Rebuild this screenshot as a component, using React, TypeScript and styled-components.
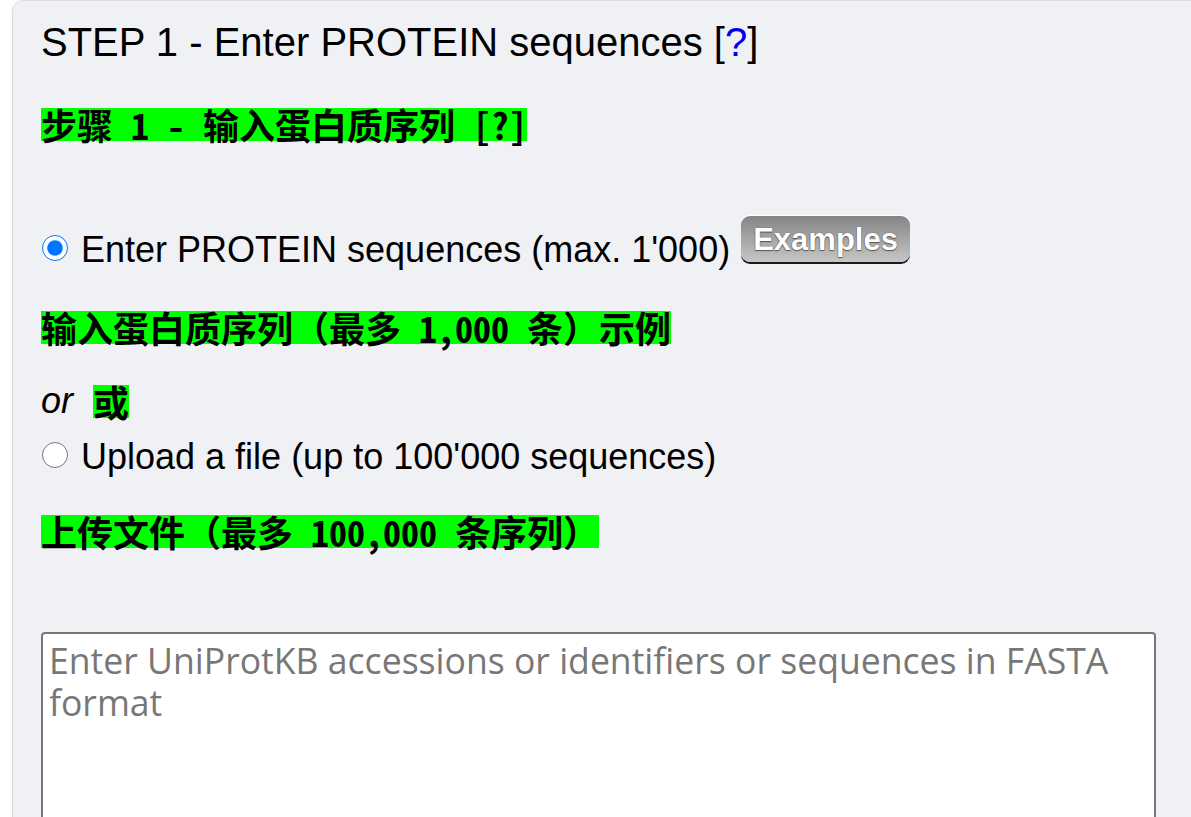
import React from 'react';
import styled, { createGlobalStyle } from 'styled-components';

const GlobalStyle = createGlobalStyle`
  body {
    margin: 0;
    background: #ffffff;
    font-family: "Liberation Sans", Arial, sans-serif;
    overflow: hidden;
  }
`;

const Panel = styled.div`
  margin: 0 -40px 0 12px;
  padding: 16px 74px 0 28px;
  background: #f0f1f5;
  border: 1px solid #dcdde2;
  border-radius: 12px;
  box-shadow: 0 0 3px rgba(0, 0, 0, 0.08);
  min-height: 900px;
`;

const Title = styled.h3`
  margin: 0;
  font-size: 40px;
  font-weight: normal;
  color: #000;
  line-height: 50px;
`;

const HelpLink = styled.a`
  color: #0000ee;
  text-decoration: none;
`;

const ZhLine = styled.div<{ $top: number }>`
  display: flex;
  margin-top: ${(p) => p.$top}px;
`;

const Zh = styled.span`
  display: inline-block;
  height: 33px;
  line-height: 33px;
  background: #00ff00;
  color: #000;
  font-family: "Noto Sans Mono CJK SC", "Liberation Mono", "Noto Sans CJK SC", monospace;
  font-size: 36px;
  font-style: normal;
  font-weight: bold;
  white-space: pre;
`;

const OptionRow = styled.label<{ $top: number }>`
  display: flex;
  align-items: center;
  margin-top: ${(p) => p.$top}px;
  font-size: 36px;
  color: #000;
  height: 48px;
`;

const Radio = styled.input`
  width: 26px;
  height: 26px;
  margin: -4px 13px 0 1px;
  accent-color: #0075ff;
`;

const ExamplesButton = styled.button`
  align-self: flex-start;
  margin: -10px 0 0 11px;
  height: 46px;
  padding: 2px 12px 0;
  border: none;
  border-radius: 9px;
  background: linear-gradient(#858585, #c6c6c6);
  box-shadow: 0 -1px 0 #ffffff, 0 2px 0 #1a1a1a;
  color: #ffffff;
  font-family: "Liberation Sans", Arial, sans-serif;
  font-size: 31px;
  font-weight: bold;
  text-shadow: 0 1px 1px #555, 0 0 1px #333;
`;

const OrRow = styled.div`
  display: flex;
  align-items: center;
  gap: 20px;
  margin-top: 39px;
  height: 36px;
  font-size: 36px;
  font-style: italic;
`;

const Sequences = styled.textarea`
  display: block;
  box-sizing: border-box;
  width: 100%;
  height: 260px;
  margin-top: 84px;
  padding: 5px 6px;
  border: 2px solid #767676;
  border-radius: 4px;
  background: #fff;
  font-family: "Open Sans", "Noto Sans", sans-serif;
  font-size: 35.6px;
  line-height: 42px;
  resize: none;
  &::placeholder {
    color: #777;
  }
`;

export default function App() {
  return (
    <>
      <GlobalStyle />
      <Panel>
        <Title>
          STEP 1 - Enter PROTEIN sequences [<HelpLink href="#">?</HelpLink>]
        </Title>
        <ZhLine $top={41}>
          <Zh>步骤 1 - 输入蛋白质序列 [?]</Zh>
        </ZhLine>
        <OptionRow $top={85}>
          <Radio type="radio" name="input" defaultChecked />
          Enter PROTEIN sequences (max. 1'000)
          <ExamplesButton type="button">Examples</ExamplesButton>
        </OptionRow>
        <ZhLine $top={37}>
          <Zh>输入蛋白质序列（最多 1,000 条）示例</Zh>
        </ZhLine>
        <OrRow>
          or<Zh>或</Zh>
        </OrRow>
        <OptionRow $top={14}>
          <Radio type="radio" name="input" />
          Upload a file (up to 100'000 sequences)
        </OptionRow>
        <ZhLine $top={34}>
          <Zh>上传文件（最多 100,000 条序列）</Zh>
        </ZhLine>
        <Sequences placeholder="Enter UniProtKB accessions or identifiers or sequences in FASTA format" />
      </Panel>
    </>
  );
}
